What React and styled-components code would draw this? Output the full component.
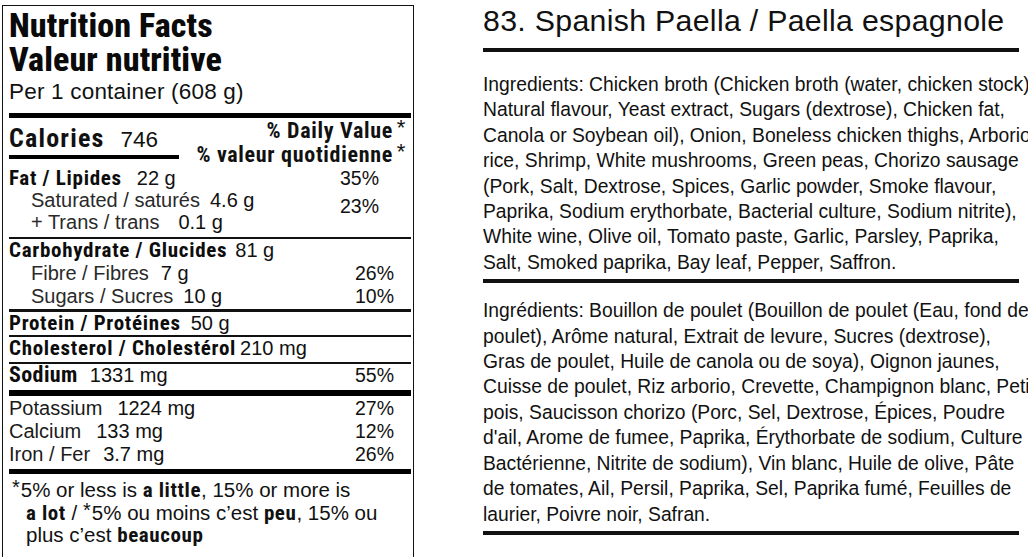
import React from "react";
import styled, { createGlobalStyle } from "styled-components";

const GlobalStyle = createGlobalStyle`
  html, body {
    margin: 0;
    padding: 0;
    background: #fff;
    overflow: hidden;
  }
  body {
    font-family: "Liberation Sans", Arial, sans-serif;
    color: #111;
  }
`;

const COND = `Roboto, "Liberation Sans", Arial, sans-serif`;
const SANS = `"Liberation Sans", Arial, sans-serif`;

const nutrients = [
  { name: "Carbohydrate / Glucides", amt: "81 g", gap: 8 },
  { name: "Fibre / Fibres", amt: "7 g", pct: "26%", sub: true, gap: 12 },
  { name: "Sugars / Sucres", amt: "10 g", pct: "10%", sub: true, gap: 10 },
];

const minerals = [
  { name: "Potassium", amt: "1224 mg", pct: "27%", gap: 15 },
  { name: "Calcium", amt: "133 mg", pct: "12%", gap: 15 },
  { name: "Iron / Fer", amt: "3.7 mg", pct: "26%", gap: 13 },
];

const english = [
  "Ingredients: Chicken broth (Chicken broth (water, chicken stock),",
  "Natural flavour, Yeast extract, Sugars (dextrose), Chicken fat,",
  "Canola or Soybean oil), Onion, Boneless chicken thighs, Arborio",
  "rice, Shrimp, White mushrooms, Green peas, Chorizo sausage",
  "(Pork, Salt, Dextrose, Spices, Garlic powder, Smoke flavour,",
  "Paprika, Sodium erythorbate, Bacterial culture, Sodium nitrite),",
  "White wine, Olive oil, Tomato paste, Garlic, Parsley, Paprika,",
  "Salt, Smoked paprika, Bay leaf, Pepper, Saffron.",
];

const french = [
  "Ingrédients: Bouillon de poulet (Bouillon de poulet (Eau, fond de",
  "poulet), Arôme natural, Extrait de levure, Sucres (dextrose),",
  "Gras de poulet, Huile de canola ou de soya), Oignon jaunes,",
  "Cuisse de poulet, Riz arborio, Crevette, Champignon blanc, Petit",
  "pois, Saucisson chorizo (Porc, Sel, Dextrose, Épices, Poudre",
  "d'ail, Arome de fumee, Paprika, Érythorbate de sodium, Culture",
  "Bactérienne, Nitrite de sodium), Vin blanc, Huile de olive, Pâte",
  "de tomates, Ail, Persil, Paprika, Sel, Paprika fumé, Feuilles de",
  "laurier, Poivre noir, Safran.",
];

const App = () => {
  return (
    <>
      <GlobalStyle />
      <Page>
        <Label>
          <Title>
            Nutrition Facts
            <br />
            Valeur nutritive
          </Title>
          <Serving>Per 1 container (608 g)</Serving>
          <Bar $h={5} $mt={5} />
          <CalBlock>
            <CalLeft>
              <CalLine>
                <CalWord>Calories</CalWord>
                <CalAmt>746</CalAmt>
              </CalLine>
              <Bar $h={4} $mt={2} />
            </CalLeft>
            <DVHead>
              % Daily Value <Star>*</Star>
              <br />
              % valeur quotidienne <Star>*</Star>
            </DVHead>
          </CalBlock>

          <Row>
            <Name>Fat / Lipides</Name>
            <Amt $gap={15}>22 g</Amt>
            <Pct $right={32}>35%</Pct>
          </Row>
          <SubGroup>
            <div>
              <Row $sub>
                <SubName>Saturated / saturés</SubName>
                <Amt $gap={10}>4.6 g</Amt>
              </Row>
              <Row $sub>
                <SubName>+ Trans / trans</SubName>
                <Amt $gap={19}>0.1 g</Amt>
              </Row>
            </div>
            <Pct $right={32} $top={6}>
              23%
            </Pct>
          </SubGroup>

          <Rule $h={2} $mt={4} />
          {nutrients.map((n) => (
            <Row key={n.name} $sub={n.sub} $h={23}>
              {n.sub ? <SubName>{n.name}</SubName> : <Name>{n.name}</Name>}
              <Amt $gap={n.gap}>{n.amt}</Amt>
              {n.pct && <Pct>{n.pct}</Pct>}
            </Row>
          ))}

          <Rule $h={3} $mt={1} />
          <Row>
            <Name>Protein / Protéines</Name>
            <Amt $gap={10}>50 g</Amt>
          </Row>
          <Rule $h={2} $mt={1} />
          <Row $h={23}>
            <Name>Cholesterol / Cholestérol</Name>
            <Amt $gap={4}>210 mg</Amt>
          </Row>
          <Rule $h={2} $mt={2} />
          <Row>
            <Name $big>Sodium</Name>
            <Amt $gap={12}>1331 mg</Amt>
            <Pct>55%</Pct>
          </Row>
          <Bar $h={6} $mt={4} />
          <Minerals>
            {minerals.map((m) => (
              <Row key={m.name} $h={23}>
                <MinName>{m.name}</MinName>
                <Amt $gap={m.gap}>{m.amt}</Amt>
                <Pct>{m.pct}</Pct>
              </Row>
            ))}
          </Minerals>
          <Bar $h={5} $mt={3} />
          <Note>
            <NoteStar>*</NoteStar>5% or less is <b>a little</b>, 15% or more is
            <br />
            <b>a lot</b> / <NoteStar>*</NoteStar>5% ou moins c’est <b>peu</b>, 15% ou
            <br />
            plus c’est <b>beaucoup</b>
          </Note>
        </Label>

        <Recipe>
          <Heading>83. Spanish Paella / Paella espagnole</Heading>
          <Rule $h={4} $mt={6} $w={536} />
          <Para $mt={20}>
            {english.map((l) => (
              <Line key={l}>{l}</Line>
            ))}
          </Para>
          <Rule $h={4} $mt={4} $w={536} />
          <Para $mt={15}>
            {french.map((l) => (
              <Line key={l}>{l}</Line>
            ))}
          </Para>
          <Rule $h={4} $mt={4} $w={536} />
        </Recipe>
      </Page>
    </>
  );
};

const Page = styled.div`
  display: flex;
  align-items: flex-start;
  gap: 69px;
  padding-left: 2px;
  width: 1028px;
  height: 557px;
  overflow: hidden;
`;

const Label = styled.section`
  box-sizing: border-box;
  flex: none;
  width: 412px;
  min-height: 620px;
  margin-top: 5px;
  border: 1px solid #111;
  padding: 2px 2px 0 6px;
  display: flex;
  flex-direction: column;
`;

const Title = styled.h1`
  margin: 0;
  padding: 0;
  font-family: ${COND};
  font-stretch: 75%;
  font-weight: 800;
  font-size: 34px;
  letter-spacing: 0.1px;
  line-height: 34px;
  color: #0a0a0a;
`;

const Serving = styled.div`
  font-family: ${SANS};
  font-size: 22.5px;
  line-height: 32px;
  height: 32px;
  letter-spacing: 0.2px;
  color: #111;
`;

const Bar = styled.div`
  flex: none;
  height: ${(p) => p.$h}px;
  margin-top: ${(p) => p.$mt || 0}px;
  background: #000;
`;

const Rule = styled.div`
  flex: none;
  height: ${(p) => p.$h}px;
  margin-top: ${(p) => p.$mt || 0}px;
  width: ${(p) => (p.$w ? `${p.$w}px` : "auto")};
  background: #111;
`;

const CalBlock = styled.div`
  display: flex;
  justify-content: space-between;
  height: 49px;
  flex: none;
`;

const CalLeft = styled.div`
  width: 170px;
  display: flex;
  flex-direction: column;
`;

const CalLine = styled.div`
  padding-top: 5px;
  height: 30px;
  line-height: 30px;
  white-space: nowrap;
`;

const CalWord = styled.span`
  font-family: ${COND};
  font-stretch: 87.5%;
  font-weight: 700;
  font-size: 26px;
  letter-spacing: 1.2px;
`;

const CalAmt = styled.span`
  font-family: ${SANS};
  font-size: 22.5px;
  margin-left: 16px;
`;

const DVHead = styled.div`
  padding-top: 1px;
  padding-right: 5px;
  text-align: right;
  font-family: ${COND};
  font-stretch: 75%;
  font-weight: 700;
  font-size: 22px;
  letter-spacing: 0.7px;
  line-height: 23.5px;
  white-space: nowrap;
`;

const Star = styled.span`
  font-family: ${SANS};
  font-weight: 400;
  font-size: 22px;
  position: relative;
  top: -3px;
  margin-left: -2px;
`;

const Row = styled.div`
  flex: none;
  display: flex;
  align-items: baseline;
  height: ${(p) => p.$h || 22}px;
  line-height: 22px;
  padding-left: ${(p) => (p.$sub ? 22 : 0)}px;
  white-space: nowrap;
`;

const SubGroup = styled.div`
  display: flex;
  align-items: flex-start;
  justify-content: space-between;
`;

const Minerals = styled.div`
  padding-top: 1px;
  display: flex;
  flex-direction: column;
`;

const Name = styled.span`
  font-family: ${COND};
  font-stretch: 75%;
  font-weight: 700;
  font-size: ${(p) => (p.$big ? 22 : 21)}px;
  letter-spacing: ${(p) => (p.$big ? 0.4 : 0.7)}px;
  color: #0d0d0d;
`;

const SubName = styled.span`
  font-family: ${SANS};
  font-size: 20px;
  color: #2a2a2a;
`;

const MinName = styled.span`
  font-family: ${SANS};
  font-size: 20px;
  color: #1a1a1a;
`;

const Amt = styled.span`
  font-family: ${SANS};
  font-size: 20px;
  margin-left: ${(p) => p.$gap || 10}px;
  color: #111;
`;

const Pct = styled.span`
  font-family: ${SANS};
  font-size: 19.5px;
  line-height: 22px;
  margin-left: auto;
  padding-right: ${(p) => p.$right || 17}px;
  padding-top: ${(p) => p.$top || 0}px;
  color: #111;
`;

const Note = styled.p`
  margin: 0;
  padding: 5px 0 0 17px;
  text-indent: -14px;
  font-family: ${SANS};
  font-size: 20.5px;
  line-height: 21.7px;
  color: #111;
  white-space: nowrap;

  b {
    font-family: ${COND};
    font-stretch: 75%;
    font-weight: 700;
    font-size: 21px;
    letter-spacing: 0.6px;
  }
`;

const NoteStar = styled.span`
  font-size: 20px;
  position: relative;
  top: -3px;
  margin-right: 1px;
`;

const Recipe = styled.main`
  flex: none;
  width: 560px;
  display: flex;
  flex-direction: column;
`;

const Heading = styled.h2`
  margin: 0;
  font-family: ${SANS};
  font-weight: 400;
  font-size: 30.3px;
  letter-spacing: 0.3px;
  line-height: 42px;
  color: #111;
  white-space: nowrap;
`;

const Para = styled.div`
  margin-top: ${(p) => p.$mt}px;
  font-family: ${SANS};
  font-size: 19.3px;
  line-height: 25.4px;
  color: #111;
`;

const Line = styled.div`
  white-space: nowrap;
`;

export default App;
